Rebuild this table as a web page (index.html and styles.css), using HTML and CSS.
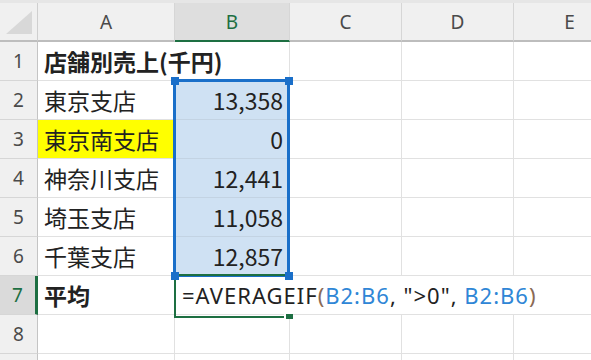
FILE: index.html
```html
<!DOCTYPE html>
<html lang="ja">

<head>
  <meta charset="UTF-8">
  <meta name="viewport" content="width=device-width, initial-scale=1.0">
  <title>店舗別売上</title>
  <link rel="stylesheet" href="styles.css">
</head>

<body>
  <div class="strip"></div>

  <div class="sheet">
    <!-- column headers -->
    <div class="corner"></div>
    <div class="col">A</div>
    <div class="col active">B</div>
    <div class="col">C</div>
    <div class="col">D</div>
    <div class="col">E</div>

    <!-- 1 -->
    <div class="row">1</div>
    <div class="cell bold wide">店舗別売上(千円)</div>
    <div class="cell"></div>
    <div class="cell"></div>
    <div class="cell"></div>

    <!-- 2 -->
    <div class="row">2</div>
    <div class="cell">東京支店</div>
    <div class="cell num">13,358</div>
    <div class="cell"></div>
    <div class="cell"></div>
    <div class="cell"></div>

    <!-- 3 -->
    <div class="row">3</div>
    <div class="cell marked">東京南支店</div>
    <div class="cell num">0</div>
    <div class="cell"></div>
    <div class="cell"></div>
    <div class="cell"></div>

    <!-- 4 -->
    <div class="row">4</div>
    <div class="cell">神奈川支店</div>
    <div class="cell num">12,441</div>
    <div class="cell"></div>
    <div class="cell"></div>
    <div class="cell"></div>

    <!-- 5 -->
    <div class="row">5</div>
    <div class="cell">埼玉支店</div>
    <div class="cell num">11,058</div>
    <div class="cell"></div>
    <div class="cell"></div>
    <div class="cell"></div>

    <!-- 6 -->
    <div class="row">6</div>
    <div class="cell">千葉支店</div>
    <div class="cell num">12,857</div>
    <div class="cell"></div>
    <div class="cell"></div>
    <div class="cell"></div>

    <!-- 7 : formula being edited -->
    <div class="row active">7</div>
    <div class="cell bold">平均</div>
    <div class="cell formula">
      <span>=AVERAGEIF<span class="paren">(</span><span class="ref">B2:B6</span>, "&gt;0", <span class="ref">B2:B6</span><span class="paren">)</span></span>
    </div>

    <!-- 8 -->
    <div class="row">8</div>
    <div class="cell"></div>
    <div class="cell"></div>
    <div class="cell"></div>
    <div class="cell"></div>
    <div class="cell"></div>

    <!-- 9 (only the top edge is in view) -->
    <div class="row"></div>
    <div class="cell"></div>
    <div class="cell"></div>
    <div class="cell"></div>
    <div class="cell"></div>
    <div class="cell"></div>

    <!-- range B2:B6 referenced by the formula -->
    <div class="range">
      <span class="knob tl"></span>
      <span class="knob tr"></span>
      <span class="knob bl"></span>
      <span class="knob br"></span>
    </div>

    <!-- active cell B7 -->
    <div class="current">
      <span class="fill"></span>
    </div>
  </div>
</body>

</html>
```

FILE: styles.css
```css
body {
  margin: 0;
  background-color: white;
  font-family: 'Noto Sans CJK JP', sans-serif;
  overflow: hidden;
}

.strip {
  height: 3px;
  background-color: #e6e6e6;
}

.sheet {
  position: relative;
  display: grid;
  grid-template-columns: 38px 137px 115px 112px 112px 112px;
  grid-auto-rows: 39px;
  width: max-content;
}

/* headers */
.corner,
.col,
.row {
  display: flex;
  align-items: center;
  justify-content: center;
  background-color: #f0f0f0;
  color: #4a4a4a;
  font-family: 'Noto Sans', sans-serif;
  font-size: 19px;
  box-sizing: border-box;
}

.corner {
  align-items: flex-end;
  justify-content: flex-end;
  padding: 0 5px 6px 0;
  border-right: 1px solid #cfcfcf;
  border-bottom: 2px solid #bdbdbd;
}

.corner::after {
  content: "";
  width: 26px;
  height: 23px;
  background-color: #d8d8d8;
  clip-path: polygon(100% 0, 100% 100%, 0 100%);
}

.col {
  border-right: 1px solid #d6d6d6;
  border-bottom: 2px solid #bdbdbd;
}

.col.active {
  background-color: #dedede;
  color: #1d6f42;
  border-bottom-color: #1d6f42;
}

.row {
  border-right: 1px solid #c4c4c4;
  border-bottom: 1px solid #d6d6d6;
}

.row.active {
  background-color: #dadada;
  color: #1d6f42;
  border-right: 3px solid #1d6f42;
}

/* cells */
.cell {
  display: flex;
  align-items: center;
  padding: 0 6px;
  border-right: 1px solid #e1e1e1;
  border-bottom: 1px solid #e1e1e1;
  box-sizing: border-box;
  font-size: 23px;
  color: #222;
  white-space: nowrap;
  min-width: 0;
}

.cell.wide {
  grid-column: span 2;
}

.cell.num {
  justify-content: flex-end;
  background-color: #cfe1f3;
  border-bottom-color: #c3d3e3;
}

.cell.marked {
  background-color: #ffff00;
}

.bold {
  font-weight: 700;
}

.cell.formula {
  grid-column: 3 / -1;
  border-right: none;
  padding-left: 7px;
  font-family: 'Noto Sans', sans-serif;
  font-size: 22px;
  letter-spacing: 1px;
}

.formula .ref {
  color: #2f86d6;
}

.formula .paren {
  color: #8a6a55;
}

/* selection overlays */
.range {
  position: absolute;
  grid-area: 3 / 3 / 8 / 4;
  top: -2px;
  left: -2px;
  right: 0;
  bottom: -1px;
  border: 3px solid #1a6fc9;
}

.knob {
  position: absolute;
  width: 8px;
  height: 8px;
  background-color: #1a6fc9;
  z-index: 3;
}

.knob.tl { left: -5px; top: -5px; }
.knob.tr { right: -6px; top: -5px; }
.knob.bl { left: -5px; bottom: -6px; }
.knob.br { right: -6px; bottom: -6px; }

.current {
  position: absolute;
  grid-area: 8 / 3 / 9 / 4;
  top: -2px;
  left: -1px;
  right: 0;
  bottom: -3px;
  border: 2px solid #1d6f42;
  border-right: none;
  z-index: 2;
}

.fill {
  position: absolute;
  right: -3px;
  bottom: -3px;
  width: 7px;
  height: 5px;
  background-color: #1d6f42;
  box-shadow: -2px 0 0 white;
}
```
